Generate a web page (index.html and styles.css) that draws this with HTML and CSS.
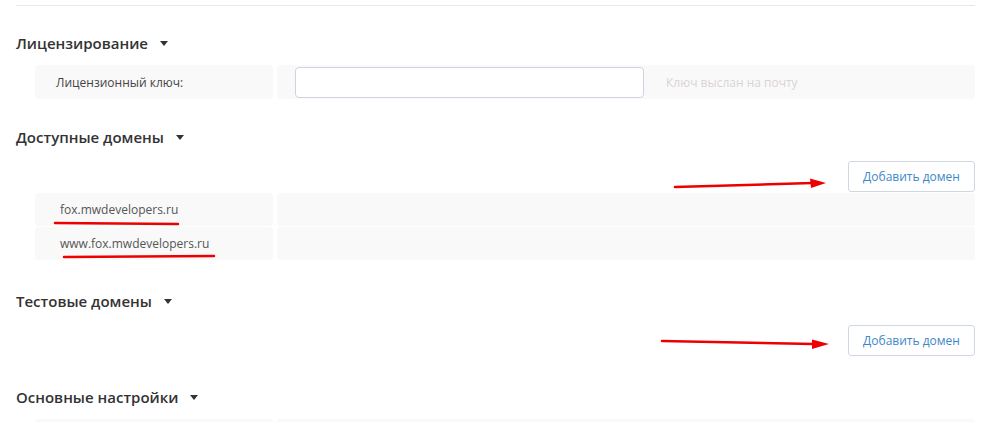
FILE: index.html
```html
<!DOCTYPE html>
<html lang="ru">
<head>
    <meta charset="UTF-8">
    <title>Настройки модуля</title>
    <link rel="stylesheet" href="styles.css">
</head>
<body>
    <div class="page">
        <div class="divider"></div>

        <!-- Лицензирование -->
        <div class="section section-license">
            <h3 class="section-title">Лицензирование <span class="caret"></span></h3>
            <div class="row">
                <div class="cell-label">Лицензионный ключ:</div>
                <div class="cell-value">
                    <input type="text" class="input">
                    <span class="hint">Ключ выслан на почту</span>
                </div>
            </div>
        </div>

        <!-- Доступные домены -->
        <div class="section section-domains">
            <h3 class="section-title title-tight">Доступные домены <span class="caret"></span></h3>
            <div class="actions">
                <button class="btn">Добавить домен</button>
            </div>
            <div class="row row-domain">
                <div class="cell-label">fox.mwdevelopers.ru</div>
                <div class="cell-value"></div>
            </div>
            <div class="row row-domain">
                <div class="cell-label">www.fox.mwdevelopers.ru</div>
                <div class="cell-value"></div>
            </div>
        </div>

        <!-- Тестовые домены -->
        <div class="section section-test">
            <h3 class="section-title title-tight">Тестовые домены <span class="caret"></span></h3>
            <div class="actions">
                <button class="btn">Добавить домен</button>
            </div>
        </div>

        <!-- Основные настройки -->
        <div class="section">
            <h3 class="section-title">Основные настройки <span class="caret"></span></h3>
            <div class="row">
                <div class="cell-label"></div>
                <div class="cell-value"></div>
            </div>
        </div>
    </div>

    <!-- red marks drawn over the screenshot -->
    <svg class="marks" width="993" height="422" viewBox="0 0 993 422">
        <g stroke="#ee0000" stroke-width="2.5" stroke-linecap="round" fill="none">
            <path d="M55 223 L178 224"/>
            <path d="M64 257 L214 256"/>
            <path d="M675 187 L812 183"/>
            <path d="M662 341 L814 344"/>
        </g>
        <g fill="#ee0000">
            <path d="M826 183 L810 178.5 L811 188 Z"/>
            <path d="M829 344 L812 339.5 L812 349 Z"/>
        </g>
    </svg>
</body>
</html>
```

FILE: styles.css
```css
/* General Styling */
html, body {
    overflow: hidden;
}

body {
    margin: 0;
    height: 422px;
    font-family: "Open Sans", "Noto Sans", sans-serif;
    background: #fff;
    color: #333;
}

.page {
    padding: 5px 18px 0 16px;
}

.divider {
    height: 1px;
    background: #e6e8eb;
}

.section-title {
    margin: 28px 0 12px;
    font-size: 15px;
    font-weight: 600;
    line-height: 20px;
    color: #333;
    display: flex;
    align-items: center;
}

.section-license .section-title {
    margin-top: 27px;
}

.title-tight {
    margin-bottom: 14px;
}

.caret {
    display: inline-block;
    margin-left: 12px;
    border-left: 4px solid transparent;
    border-right: 4px solid transparent;
    border-top: 5px solid #333;
}

.section-domains {
    padding-bottom: 3px;
}

.section-test {
    padding-bottom: 3px;
}

/* Rows */
.row {
    display: flex;
    gap: 4px;
    margin-left: 19px;
    height: 34px;
}

.row-domain {
    height: 33px;
    margin-top: 1px;
}

.cell-label {
    width: 238px;
    flex-shrink: 0;
    background: #f9f9f9;
    border-radius: 4px;
    display: flex;
    align-items: center;
    padding-left: 21px;
    box-sizing: border-box;
    font-size: 12px;
    color: #444;
}

.row-domain .cell-label {
    padding-left: 25px;
    font-size: 12px;
    color: #555;
}

.cell-value {
    flex: 1;
    background: #f9f9f9;
    border-radius: 4px;
    display: flex;
    align-items: center;
    padding-left: 18px;
}

.input {
    width: 349px;
    height: 31px;
    box-sizing: border-box;
    border: 1px solid #ccd5df;
    border-radius: 4px;
    background: #fff;
    outline: none;
    font-family: inherit;
}

.hint {
    margin-left: 22px;
    font-size: 12px;
    color: #d9d4d4;
}

/* Buttons */
.actions {
    display: flex;
    justify-content: flex-end;
}

.btn {
    height: 31px;
    width: 127px;
    border: 1px solid #cfd9e4;
    border-radius: 3px;
    background: #fff;
    color: #3d88c9;
    font-family: inherit;
    font-size: 12px;
    cursor: pointer;
}

.marks {
    position: absolute;
    top: 0;
    left: 0;
    pointer-events: none;
}
```
